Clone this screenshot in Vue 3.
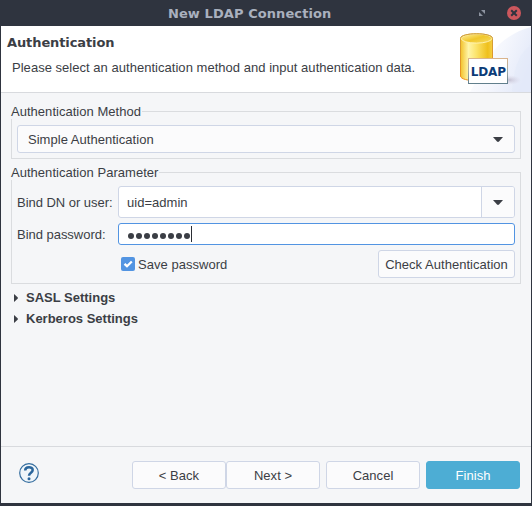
<script setup>
import { ref } from 'vue'

const method = ref('Simple Authentication')
const user = ref('uid=admin')
const savePassword = ref(true)
const passwordLength = 8
const sections = ['SASL Settings', 'Kerberos Settings']
</script>

<template>
  <div class="window">
    <header class="titlebar">
      <span class="title">New LDAP Connection</span>
      <svg class="maximize" width="8" height="8" viewBox="0 0 8 8">
        <path d="M3 1H7V5Z M1 3V7H5Z" fill="#8d93a0" />
      </svg>
      <svg class="close" width="14" height="14" viewBox="0 0 14 14">
        <circle cx="7" cy="7" r="7" fill="#cc575d" />
        <path d="M4.200 4.200L9.800 9.800M9.800 4.200L4.200 9.800" stroke="#2f343f" stroke-width="2" />
      </svg>
    </header>

    <section class="banner">
      <div class="heading">
        <h1>Authentication</h1>
        <p>Please select an authentication method and input authentication data.</p>
      </div>
      <svg class="art" width="75" height="66" viewBox="0 0 75 66">
        <defs>
          <linearGradient id="gold" x1="0" x2="1">
            <stop offset="0" stop-color="#f3c22b" />
            <stop offset=".25" stop-color="#fff5a8" />
            <stop offset=".5" stop-color="#fbe36a" />
            <stop offset=".85" stop-color="#efc01c" />
            <stop offset="1" stop-color="#f5cf45" />
          </linearGradient>
          <linearGradient id="rim" x1="0" x2="0" y1="0" y2="1">
            <stop offset="0" stop-color="#cfa13a" />
            <stop offset="1" stop-color="#f08f1c" />
          </linearGradient>
          <linearGradient id="top" x1="0" x2="1" y1="0" y2="1">
            <stop offset="0" stop-color="#fff0a0" />
            <stop offset=".5" stop-color="#f0c72c" />
            <stop offset="1" stop-color="#f7dc62" />
          </linearGradient>
          <linearGradient id="sky" x1="0" x2="1" y1="0.2" y2="0.6">
            <stop offset="0" stop-color="#ffffff" />
            <stop offset=".5" stop-color="#f5f7fd" />
            <stop offset="1" stop-color="#e3e9f9" />
          </linearGradient>
          <linearGradient id="card" x1="0" x2="0" y1="0" y2="1">
            <stop offset="0" stop-color="#d9b48c" />
            <stop offset=".5" stop-color="#a3aaa5" />
            <stop offset="1" stop-color="#617f8c" />
          </linearGradient>
          <radialGradient id="shade">
            <stop offset="0" stop-color="#a9a2b8" stop-opacity=".6" />
            <stop offset="1" stop-color="#d5cbdc" stop-opacity="0" />
          </radialGradient>
        </defs>
        <path d="M75 1C60 5 44 14 34 30L14 66H75Z" fill="url(#sky)" />
        <path d="M75 19C64 27 58 39 56 66H75Z" fill="#e3e8f8" opacity=".45" />
        <ellipse cx="53" cy="54" rx="12" ry="5" fill="url(#shade)" />
        <path d="M4.500 12.500C4.500 6.200 36.500 6.200 36.500 12.500V50C36.500 56.300 4.500 56.300 4.500 50Z" fill="url(#gold)" stroke="url(#rim)" />
        <ellipse cx="20.500" cy="12.500" rx="15.300" ry="4.600" fill="url(#top)" stroke="#fff4b8" stroke-width=".9" />
        <path d="M4.500 12.500C4.500 6.200 36.500 6.200 36.500 12.500" fill="none" stroke="#cf9b35" />
        <rect x="12.500" y="32.500" width="39" height="25" fill="#fff" stroke="url(#card)" />
        <text x="14.700" y="50" textLength="35.300" lengthAdjust="spacing" class="badge-text">LDAP</text>
      </svg>
    </section>

    <main class="content">
      <fieldset class="group method">
        <legend>Authentication Method</legend>
        <div class="select">
          <span>{{ method }}</span>
          <svg width="10" height="5" viewBox="0 0 10 5"><path d="M0 0H10L6 4.500Q5 5.300 4 4.500Z" fill="#3b3e45" /></svg>
        </div>
      </fieldset>

      <fieldset class="group params">
        <legend>Authentication Parameter</legend>
        <div class="row user-row">
          <label>Bind DN or user:</label>
          <div class="combo">
            <span class="combo-text">{{ user }}</span>
            <span class="combo-button">
              <svg width="10" height="5" viewBox="0 0 10 5"><path d="M0 0H10L6 4.500Q5 5.300 4 4.500Z" fill="#3b3e45" /></svg>
            </span>
          </div>
        </div>
        <div class="row password-row">
          <label>Bind password:</label>
          <div class="password">
            <i v-for="n in passwordLength" :key="n" class="dot"></i>
            <i class="caret"></i>
          </div>
        </div>
        <div class="row options-row">
          <div class="check" @click="savePassword = !savePassword">
            <svg width="14" height="14" viewBox="0 0 14 14">
              <rect width="14" height="14" rx="2" fill="#5294e2" />
              <path v-if="savePassword" d="M3.500 6.800L6 9.200L10.800 4.500" fill="none" stroke="#fff" stroke-width="2.300" />
            </svg>
            <span>Save password</span>
          </div>
          <button class="btn check-auth">Check Authentication</button>
        </div>
      </fieldset>

      <div class="sections">
        <div v-for="s in sections" :key="s" class="section">
          <svg width="5" height="8" viewBox="0 0 5 8"><path d="M0 0L3.600 3.300Q4.300 4 3.600 4.700L0 8Z" fill="#3b3e45" /></svg>
          <span>{{ s }}</span>
        </div>
      </div>
    </main>

    <footer class="footer">
      <svg class="help" width="20" height="20" viewBox="0 0 20 20">
        <circle cx="10" cy="10" r="9.300" fill="#f0f6fa" stroke="#346d9f" stroke-width="1.200" />
        <path d="M6.200 7.500C6.200 3.200 13.700 3.200 13.700 7C13.700 9.800 10 9.600 10 12.800" fill="none" stroke="#2b669c" stroke-width="2.500" />
        <circle cx="10" cy="15.700" r="1.500" fill="#2b669c" />
      </svg>
      <div class="actions">
        <div class="pair">
          <button class="btn">&lt; Back</button>
          <button class="btn">Next &gt;</button>
        </div>
        <button class="btn">Cancel</button>
        <button class="btn primary">Finish</button>
      </div>
    </footer>
  </div>
</template>

<style>
body {
  margin: 0;
  overflow: hidden;
}
</style>

<style scoped>
* {
  box-sizing: border-box;
}
.window {
  width: 532px;
  height: 506px;
  display: flex;
  flex-direction: column;
  padding: 0 1px 3px;
  background: #2f343f;
  color: #3b3e45;
  font: 13px/16px "Liberation Sans", Arial, sans-serif;
  letter-spacing: 0.03px;
  white-space: nowrap;
}
svg {
  display: block;
  flex: none;
}
.titlebar {
  height: 26px;
  flex: none;
  display: grid;
  grid-template-columns: 477px 8px 21px 14px;
  align-items: center;
}
.title {
  padding: 2px 0 0 167px;
  color: #a9b0be;
  font: bold 13px/16px "DejaVu Sans", sans-serif;
  letter-spacing: 0.08px;
}
.close {
  grid-column: 4;
}
.banner {
  height: 67px;
  flex: none;
  display: flex;
  justify-content: space-between;
  background: #fff;
  border-bottom: 1px solid #d8dade;
}
.heading {
  padding: 9px 0 0 6px;
}
h1 {
  margin: 0;
  font: bold 13px/16px "DejaVu Sans", sans-serif;
  letter-spacing: -0.1px;
}
p {
  margin: 9px 0 0 5px;
}
.badge-text {
  font: bold 12px "DejaVu Sans", sans-serif;
  letter-spacing: 0;
  fill: #0b3c78;
}
.content {
  flex: 1;
  background: #f5f6f8;
  padding: 10px 10px 0;
}
.group {
  margin: 0;
  min-width: 0;
  border: 1px solid #dadcdf;
}
legend {
  margin-left: -6px;
  padding: 0 1px 0 0;
  height: 16px;
  line-height: 18px;
  background: #f5f6f8;
}
.method {
  height: 56px;
  padding: 6px 5px 0;
}
.params {
  height: 120px;
  margin-top: 5px;
  padding: 6px 5px 0;
}
.select {
  height: 28px;
  display: flex;
  align-items: center;
  justify-content: space-between;
  padding: 0 11px 0 10px;
  background: #fbfbfc;
  border: 1px solid #cfd6e6;
  border-radius: 3px;
}
.select span,
.row label,
.check span {
  padding-top: 2px;
}
.row {
  display: grid;
  grid-template-columns: 101px 1fr;
  align-items: center;
}
.row label {
  letter-spacing: -0.03px;
}
.combo {
  height: 32px;
  display: flex;
  background: #fff;
  border: 1px solid #cfd6e6;
  border-radius: 3px;
}
.combo-text {
  flex: 1;
  padding: 8px 8px 0;
}
.combo-button {
  width: 33px;
  display: grid;
  place-items: center;
  border-left: 1px solid #cfd6e6;
  background: #fbfbfc;
  border-radius: 0 2px 2px 0;
}
.password-row {
  margin-top: 5px;
}
.password {
  height: 22px;
  display: flex;
  align-items: center;
  gap: 1.500px;
  padding-left: 8.500px;
  background: #fff;
  border: 1px solid #5294e2;
  border-radius: 3px;
}
.dot {
  width: 6.500px;
  height: 6.500px;
  margin-top: 3.500px;
  border-radius: 50%;
  background: #3b3e45;
}
.caret {
  width: 1px;
  height: 16px;
  margin-left: -1px;
  background: #2b2e35;
}
.options-row {
  margin-top: 5px;
  grid-template-columns: 104px 1fr auto;
}
.check {
  grid-column: 2;
  display: flex;
  align-items: center;
  gap: 3px;
}
.btn {
  width: 94px;
  height: 28px;
  padding: 2px 0 0;
  background: #fbfbfc;
  border: 1px solid #cfd6e6;
  border-radius: 3px;
  color: #3b3e45;
  font: inherit;
  letter-spacing: inherit;
}
.check-auth {
  width: 137px;
}
.sections {
  padding: 6px 0 0 3px;
  display: flex;
  flex-direction: column;
  gap: 5px;
  font-weight: bold;
  letter-spacing: 0;
}
.section {
  display: flex;
  align-items: center;
  gap: 7px;
}
.footer {
  height: 57px;
  flex: none;
  display: flex;
  justify-content: space-between;
  padding: 14px 11px 0 18px;
  background: #f5f6f8;
  border-top: 1px solid #d8dade;
}
.help {
  margin-top: 2px;
}
.actions {
  display: flex;
  gap: 6px;
}
.pair {
  display: flex;
}
.primary {
  color: #fff;
  background: #4dadd4;
  border-color: #4dadd4;
}
</style>
